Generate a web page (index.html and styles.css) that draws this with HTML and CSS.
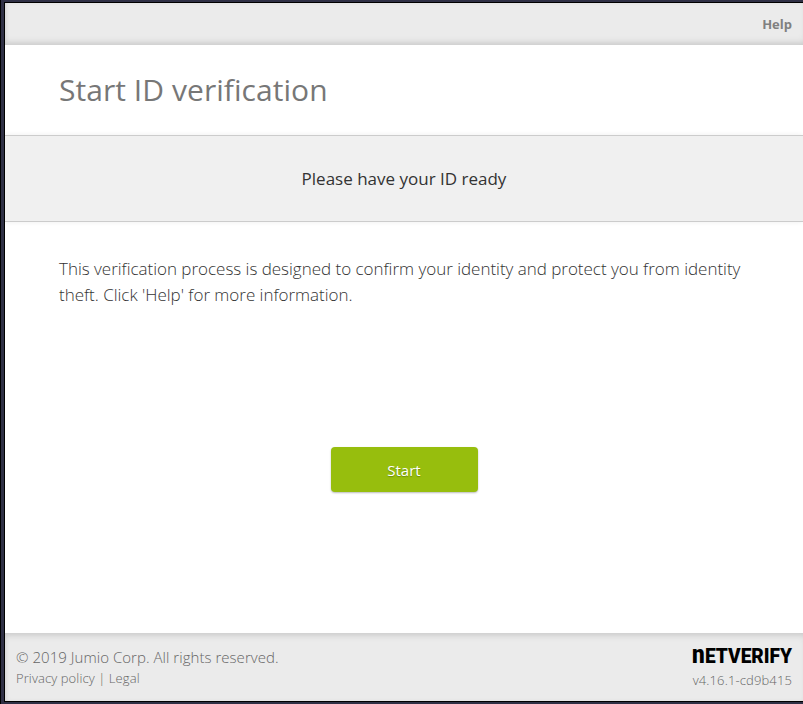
FILE: index.html
```html
<!DOCTYPE html>
<html lang="en">
<head>
<meta charset="utf-8">
<title>Start ID verification</title>
<link rel="stylesheet" href="styles.css">
</head>
<body>
<div class="window">
  <header class="topbar"><a class="help">Help</a></header>
  <div class="title"><h1>Start ID verification</h1></div>
  <div class="banner">Please have your ID ready</div>
  <main class="content">
    <p class="intro">This verification process is designed to confirm your identity and protect you from identity<br>theft. Click 'Help' for more information.</p>
    <button class="start">Start</button>
  </main>
  <footer class="footer">
    <div class="legal">
      <span class="copyright">© 2019 Jumio Corp. All rights reserved.</span>
      <span class="links">Privacy policy | Legal</span>
    </div>
    <div class="brand">
      <svg class="logo" width="100" height="20" viewBox="0 0 100 20"><text transform="translate(0 18) scale(1.07 1.27)" x="0" y="0">n</text><text x="13" y="18" textLength="87" lengthAdjust="spacingAndGlyphs">ETVERIFY</text></svg>
      <span class="version">v4.16.1-cd9b415</span>
    </div>
  </footer>
</div>
</body>
</html>
```
FILE: styles.css
```css
* { box-sizing: border-box; }
body {
  margin: 0;
  height: 704px;
  padding: 2px 0 2px 4px;
  overflow: hidden;
  background: linear-gradient(90deg, #000 1px, #2f3045 1px);
  font-family: "Open Sans", sans-serif;
}
.window {
  height: 700px;
  border: 1px solid #000;
  border-right: 0;
  background: #fff;
  display: flex;
  flex-direction: column;
  overflow: hidden;
}
.topbar {
  height: 42px;
  padding: 0 11px;
  display: flex;
  align-items: center;
  justify-content: flex-end;
  background: #ebebeb;
  box-shadow: inset 0 -6px 7px -4px #c8c8c8, inset 2px 0 5px -2px #ccc;
}
.help { font-size: 13px; font-weight: 700; color: #808080; }
.title {
  height: 90px;
  padding: 0 54px;
  display: flex;
  align-items: center;
}
h1 { margin: 0; font-size: 30px; font-weight: 400; color: #777; line-height: 40px; letter-spacing: .05px; }
.banner {
  height: 87px;
  border-top: 1px solid #ccc;
  border-bottom: 1px solid #ccc;
  background: #f0f0f0;
  display: flex;
  align-items: center;
  justify-content: center;
  font-size: 17px;
  color: #333;
  box-shadow: 0 0 5px #eee;
}
.content {
  flex: 1;
  padding: 34px 54px 0;
  display: flex;
  flex-direction: column;
  align-items: center;
}
.intro {
  margin: 0;
  align-self: stretch;
  font-size: 17px;
  font-weight: 300;
  line-height: 26px;
  letter-spacing: -.02px;
  color: #333;
  white-space: nowrap;
}
.start {
  margin-top: 139px;
  width: 147px;
  height: 45px;
  border: 0;
  border-radius: 4px;
  background: #97be0d;
  box-shadow: 0 1px 2px #bbb;
  color: #fff;
  font: 400 15px "Open Sans", sans-serif;
  text-shadow: 0 1px 1px #6f8c0a;
}
.footer {
  height: 68px;
  padding: 12px 11px 0;
  display: flex;
  justify-content: space-between;
  background: #ebebeb;
  box-shadow: inset 0 6px 7px -4px #c8c8c8, inset 2px 0 5px -2px #ccc;
  font-weight: 300;
  color: #666;
}
.legal, .brand { display: flex; flex-direction: column; }
.brand { align-items: flex-end; }
.copyright { font-size: 15px; line-height: 24px; letter-spacing: .04px; }
.links { font-size: 13px; line-height: 18px; letter-spacing: .1px; }
.logo { fill: #000; overflow: visible; }
.logo text { font: 900 21px Roboto, sans-serif; }
.version { margin-top: 6px; font-size: 13px; line-height: 18px; letter-spacing: .13px; }
```
